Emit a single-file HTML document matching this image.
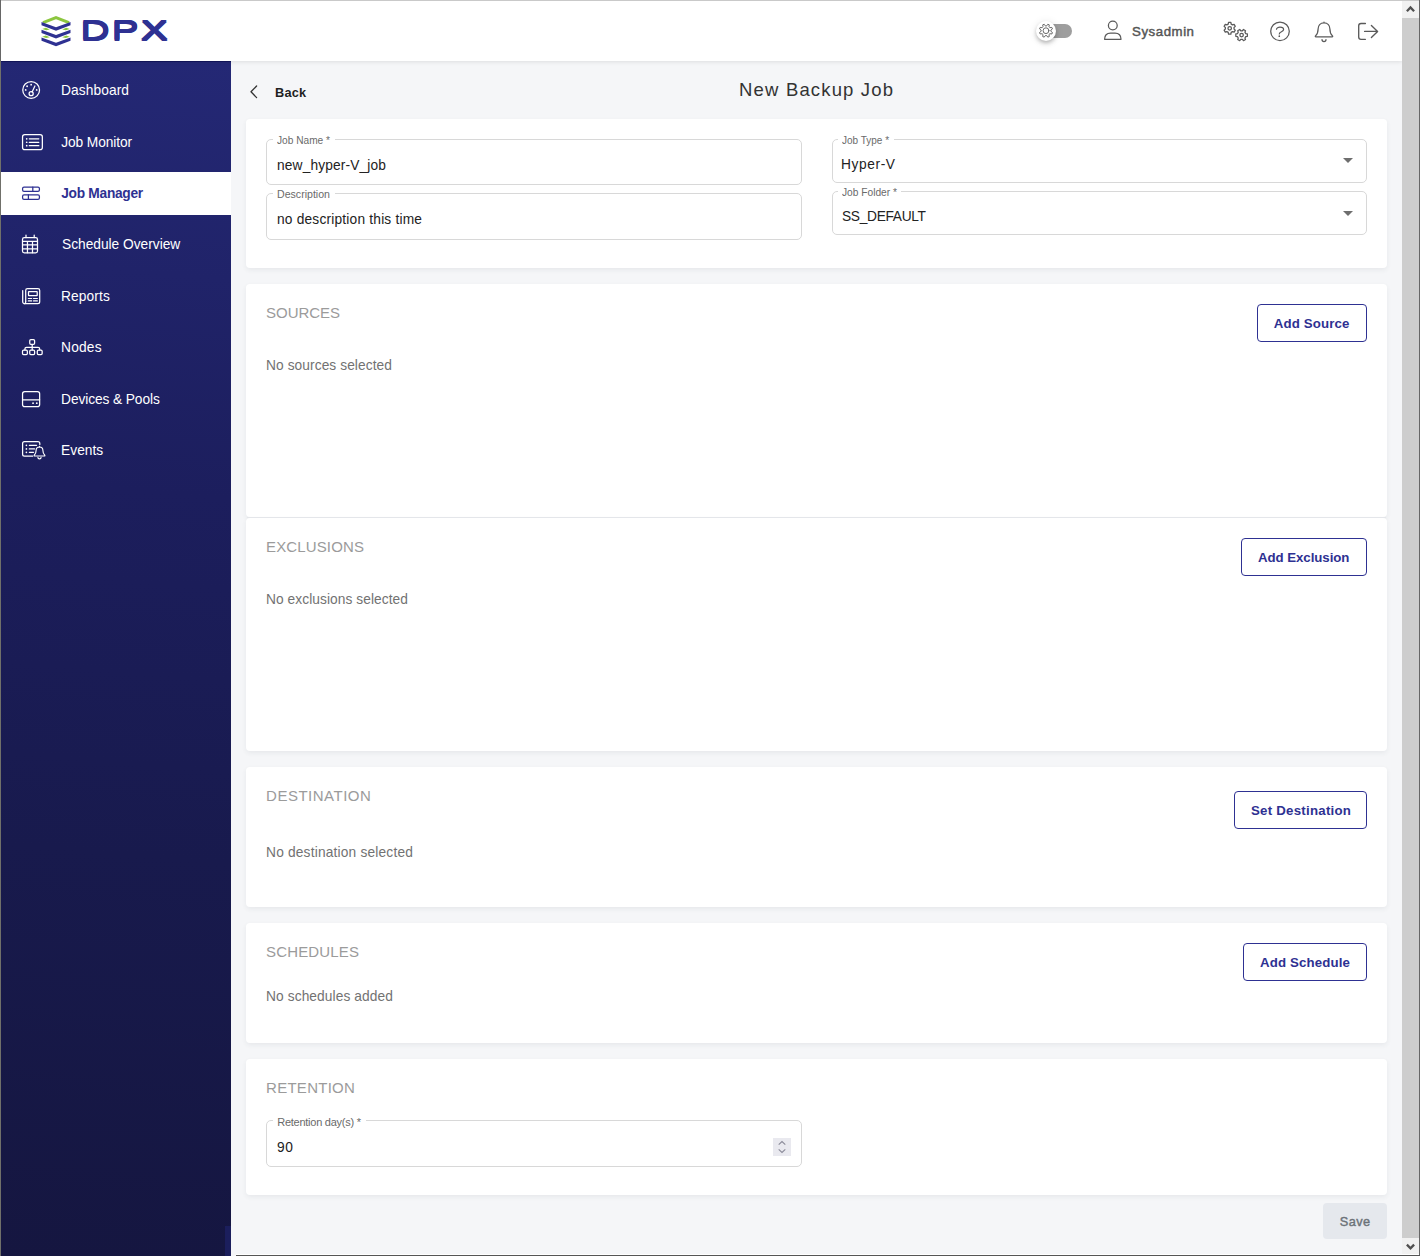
<!DOCTYPE html>
<html lang="en"><head><meta charset="utf-8"><title>DPX - New Backup Job</title>
<style>
html,body{margin:0;padding:0}
body{width:1420px;height:1256px;position:relative;overflow:hidden;background:#f5f6f8;font-family:"Liberation Sans",sans-serif;}
.t{position:absolute;white-space:nowrap;line-height:1;z-index:5}
.abs{position:absolute}
#hdr{left:1px;top:1px;width:1401px;height:60px;background:#fff;box-shadow:0 1px 4px rgba(0,0,0,.10);z-index:3}
#side{left:1px;top:61px;width:230px;height:1195px;background:linear-gradient(185deg,#242875 0%,#1c1e5d 36%,#181a4d 66%,#151640 100%);z-index:2}
#active{left:1px;top:172px;width:230px;height:43px;background:#fff;z-index:3}
.card{position:absolute;left:246px;width:1141px;background:#fff;border-radius:4px;box-shadow:0 2px 5px rgba(40,50,70,.07);z-index:1}
.fs{position:absolute;border:1px solid #d8d8d8;border-radius:5px;box-sizing:border-box;z-index:4}
.gap{position:absolute;background:#fff;height:3px;z-index:5}
.btn{position:absolute;box-sizing:border-box;border:1px solid #2e3192;border-radius:4px;background:#fff;z-index:4}
svg{position:absolute;overflow:visible;z-index:12}
.wb{position:absolute;z-index:20}

</style></head>
<body>
<div class="abs" id="hdr"></div>
<div class="abs" id="side"></div>
<div class="abs" id="active"></div>

<span id="logo" class="t" style="left:79.8px;top:17.2px;font-size:26.8px;font-weight:400;color:#2e3192;letter-spacing:1.5px;transform-origin:0 0;transform:scaleX(1.5);text-shadow:0.7px 0 0 #2e3192,0 1px 0 #2e3192,0.7px 1px 0 #2e3192,0 2px 0 #2e3192,0.7px 2px 0 #2e3192;z-index:13">DPX</span>
<div class="abs" style="left:1040px;top:24px;width:32px;height:14px;border-radius:7px;background:#9e9e9e;z-index:10"></div>
<div class="abs" style="left:1036px;top:20.7px;width:20px;height:20px;border-radius:50%;background:#fff;box-shadow:0 2px 4px -1px rgba(0,0,0,.2),0 3px 4px 0 rgba(0,0,0,.10),0 1px 8px 0 rgba(0,0,0,.10);z-index:11"></div>
<!-- cards -->
<div class="card" style="top:119px;height:149px"></div>
<div class="card" style="top:284px;height:233px"></div>
<div class="card" style="top:518px;height:233px"></div>
<div class="card" style="top:767px;height:140px"></div>
<div class="card" style="top:923px;height:120px"></div>
<div class="card" style="top:1059px;height:136px"></div>

<div class="abs" style="left:247px;top:517px;width:1139px;height:1px;background:#e4e6ea;z-index:2"></div>
<!-- fields -->
<div class="fs" style="left:266px;top:139px;width:536px;height:46px"></div>
<div class="gap" style="left:273px;top:138px;width:62px"></div>
<div class="fs" style="left:266px;top:193px;width:536px;height:47px"></div>
<div class="gap" style="left:273px;top:192px;width:62px"></div>
<div class="fs" style="left:832px;top:139px;width:535px;height:44px"></div>
<div class="gap" style="left:838px;top:138px;width:56px"></div>
<div class="fs" style="left:832px;top:191px;width:535px;height:44px"></div>
<div class="gap" style="left:838px;top:190px;width:63px"></div>
<div class="fs" style="left:266px;top:1120px;width:536px;height:47px"></div>
<div class="gap" style="left:273px;top:1119px;width:93px"></div>

<!-- buttons -->
<div class="btn" style="left:1257px;top:304px;width:110px;height:38px"></div>
<div class="btn" style="left:1241px;top:538px;width:126px;height:38px"></div>
<div class="btn" style="left:1234px;top:791px;width:133px;height:38px"></div>
<div class="btn" style="left:1243px;top:943px;width:124px;height:38px"></div>
<div class="abs" style="left:1323px;top:1203px;width:64px;height:36px;border-radius:4px;background:#e5e8ed;z-index:4"></div>

<!-- scrollbar -->
<div class="abs" style="left:1402px;top:1px;width:17px;height:1254px;background:#f1f1f1;z-index:10"></div>
<div class="abs" style="left:1402px;top:18px;width:17px;height:1220px;background:#cdcdcd;z-index:11"></div>

<!-- window border -->
<div class="wb" style="left:0;top:0;width:1420px;height:1px;background:#c9c9c9"></div>
<div class="wb" style="left:0;top:0;width:1px;height:61px;background:#666666"></div>
<div class="wb" style="left:0;top:61px;width:1px;height:1195px;background:#70706a"></div>
<div class="abs" style="left:1px;top:61px;width:230px;height:1px;background:rgba(5,8,70,.55);z-index:3"></div>
<div class="wb" style="left:1419px;top:0;width:1px;height:1256px;background:#666666"></div>
<div class="wb" style="left:236px;top:1254px;width:1183px;height:1px;background:#ffffff"></div>
<div class="wb" style="left:236px;top:1255px;width:1184px;height:1px;background:#555555"></div>
<div class="abs" style="left:225px;top:1226px;width:6px;height:30px;background:#1b1e5c;z-index:3"></div>

<svg width="1420" height="1256" viewBox="0 0 1420 1256" style="left:0;top:0" fill="none" stroke-linecap="round" stroke-linejoin="round">
<g transform="translate(41,16)">
<path d="M2,6.6 L15,1.7 L28,6.6" stroke="#8cc63f" stroke-width="3" stroke-linecap="butt" stroke-linejoin="miter"/>
<polygon fill="#2e3192" points="0.5,6.00 15,11.20 29.5,6.00 29.5,9.20 15,14.70 0.5,9.20"/>
<polygon fill="#2e3192" points="0.5,13.75 15,18.95 29.5,13.75 29.5,16.95 15,22.45 0.5,16.95"/>
<polygon fill="#2e3192" points="0.5,21.50 15,26.70 29.5,21.50 29.5,24.70 15,30.20 0.5,24.70"/>
<polygon fill="#8cc63f" points="1.2,12.90 4.8,11.80 8.8,13.40 5.2,14.30"/>
<polygon fill="#8cc63f" points="28.8,12.90 25.2,11.80 21.2,13.40 24.8,14.30"/>
<polygon fill="#8cc63f" points="1.2,20.65 4.8,19.55 8.8,21.15 5.2,22.05"/>
<polygon fill="#8cc63f" points="28.8,20.65 25.2,19.55 21.2,21.15 24.8,22.05"/>
</g>
<g stroke="#ffffff" stroke-width="1.25">
<circle cx="31.15" cy="89.9" r="8.4"/>
<circle cx="31.15" cy="93.7" r="2.05"/>
<path d="M32.1,91.9 L34.9,86.0"/>
<circle cx="31.15" cy="84.70" r="0.9" fill="#ffffff" stroke="none"/>
<circle cx="27.10" cy="86.25" r="0.9" fill="#ffffff" stroke="none"/>
<circle cx="25.70" cy="89.90" r="0.9" fill="#ffffff" stroke="none"/>
<circle cx="36.70" cy="89.90" r="0.9" fill="#ffffff" stroke="none"/>
<rect x="22.55" y="134.55" width="19.8" height="15.1" rx="2.2"/>
<path d="M29.3,138.80 H38.8"/>
<circle cx="26.7" cy="138.80" r="0.85" fill="#ffffff" stroke="none"/>
<path d="M29.3,142.25 H38.8"/>
<circle cx="26.7" cy="142.25" r="0.85" fill="#ffffff" stroke="none"/>
<path d="M29.3,145.65 H38.8"/>
<circle cx="26.7" cy="145.65" r="0.85" fill="#ffffff" stroke="none"/>
</g>
<g stroke="#2e3192" stroke-width="1.25">
<rect x="22.6" y="187" width="16.8" height="4.4" rx="1.4"/>
<path d="M32.8,187 V191.4"/>
<rect x="22.6" y="194.9" width="16.8" height="4.4" rx="1.4"/>
<path d="M28.4,194.9 V199.3"/>
</g>
<g stroke="#ffffff" stroke-width="1.25">
<rect x="22.5" y="237.7" width="15" height="15.1" rx="1.8"/>
<path d="M26,235 V237.6 M34.2,235 V237.6"/>
<path d="M22.6,241.25 H37.4 M22.6,244.9 H37.4 M22.6,248.9 H37.4 M27.45,241.3 V252.7 M32.5,241.3 V252.7"/>
<path d="M25.7,301.6 V290.4 a1.8,1.8 0 0 1 1.8,-1.8 H37.9 a1.8,1.8 0 0 1 1.8,1.8 V301.8 a1.9,1.9 0 0 1 -1.9,1.9 H24.6 a1.9,1.9 0 0 1 -1.9,-1.9 V290.6"/>
<path d="M25.7,301.6 a1.5,1.9 0 0 1 -1.5,2.1"/>
<rect x="28.5" y="291.6" width="8.7" height="3.9" rx="0.3"/>
<path d="M28.3,298.5 H31.7 M33.5,298.5 H37.4 M28.3,300.9 H31.7 M33.5,300.9 H37.4" stroke-width="1.1"/>
<rect x="29.75" y="339.6" width="4.85" height="4.8" rx="1.1"/>
<rect x="22.50" y="350.1" width="4.85" height="4.6" rx="1.1"/>
<rect x="29.75" y="350.1" width="4.85" height="4.6" rx="1.1"/>
<rect x="37.30" y="350.1" width="4.85" height="4.6" rx="1.1"/>
<path d="M32.2,344.6 V349.9 M24.9,349.9 V348.9 a1.6,1.6 0 0 1 1.6,-1.6 H38.1 a1.6,1.6 0 0 1 1.6,1.6 V349.9"/>
<rect x="22.55" y="391.6" width="17.1" height="15.1" rx="2.2"/>
<path d="M22.6,399.8 H39.6"/>
<circle cx="33.05" cy="403.2" r="0.9" fill="#ffffff" stroke="none"/>
<circle cx="36.8" cy="403.2" r="0.9" fill="#ffffff" stroke="none"/>
<path d="M32.6,456.2 H24.5 a1.9,1.9 0 0 1 -1.9,-1.9 V443.4 a1.9,1.9 0 0 1 1.9,-1.9 H37.9 a1.9,1.9 0 0 1 1.9,1.9 V444.6"/>
<path d="M29.3,445.30 H36.60" stroke-width="1.15"/>
<circle cx="26.4" cy="445.30" r="0.85" fill="#ffffff" stroke="none"/>
<path d="M29.3,448.90 H34.60" stroke-width="1.15"/>
<circle cx="26.4" cy="448.90" r="0.85" fill="#ffffff" stroke="none"/>
<path d="M29.3,452.30 H33.60" stroke-width="1.15"/>
<circle cx="26.4" cy="452.30" r="0.85" fill="#ffffff" stroke="none"/>
<path d="M39.5,446.4 V447 M39.5,447 c-2.1,0 -3.4,1.6 -3.4,3.6 c0,2.6 -0.7,3.7 -1.9,4.7 c-0.3,0.3 -0.1,0.7 0.3,0.7 H44.5 c0.4,0 0.6,-0.4 0.3,-0.7 c-1.2,-1 -1.9,-2.1 -1.9,-4.7 c0,-2 -1.3,-3.6 -3.4,-3.6 Z" stroke-width="1.15"/>
<path d="M37.9,457.3 a1.6,1.6 0 0 0 3.2,0" stroke-width="1.15"/>
</g>
<path d="M256.6,86 L251,91.8 L256.6,97.6" stroke="#333" stroke-width="1.3"/>
<g stroke="#5a5a5a" stroke-width="0.9">
<path d="M1046.60,25.84 L1047.80,24.25 L1049.29,24.86 L1049.01,26.84 L1049.86,27.69 L1051.84,27.41 L1052.45,28.90 L1050.86,30.10 L1050.86,31.30 L1052.45,32.50 L1051.84,33.99 L1049.86,33.71 L1049.01,34.56 L1049.29,36.54 L1047.80,37.15 L1046.60,35.56 L1045.40,35.56 L1044.20,37.15 L1042.71,36.54 L1042.99,34.56 L1042.14,33.71 L1040.16,33.99 L1039.55,32.50 L1041.14,31.30 L1041.14,30.10 L1039.55,28.90 L1040.16,27.41 L1042.14,27.69 L1042.99,26.84 L1042.71,24.86 L1044.20,24.25 L1045.40,25.84 Z"/>
<circle cx="1046" cy="30.7" r="2.9"/>
</g>
<g stroke="#5a5a5a" stroke-width="1.25">
<circle cx="1112.8" cy="25.45" r="4.4"/>
<path d="M1104.6,39.3 C1104.6,35 1107,33.1 1110.6,33.1 H1115 C1118.6,33.1 1121,35 1121,39.3 Z"/>
<path d="M1228.23,24.10 L1228.53,22.47 L1230.87,22.47 L1231.17,24.10 L1232.56,24.91 L1234.12,24.34 L1235.29,26.37 L1234.03,27.45 L1234.03,29.05 L1235.29,30.13 L1234.12,32.16 L1232.56,31.59 L1231.17,32.40 L1230.87,34.03 L1228.53,34.03 L1228.23,32.40 L1226.84,31.59 L1225.28,32.16 L1224.11,30.13 L1225.37,29.05 L1225.37,27.45 L1224.11,26.37 L1225.28,24.34 L1226.84,24.91 Z"/>
<circle cx="1229.7" cy="28.25" r="1.75"/>
<path d="M1242.40,30.77 L1243.48,29.51 L1245.51,30.68 L1244.94,32.24 L1245.75,33.63 L1247.38,33.93 L1247.38,36.27 L1245.75,36.57 L1244.94,37.96 L1245.51,39.52 L1243.48,40.69 L1242.40,39.43 L1240.80,39.43 L1239.72,40.69 L1237.69,39.52 L1238.26,37.96 L1237.45,36.57 L1235.82,36.27 L1235.82,33.93 L1237.45,33.63 L1238.26,32.24 L1237.69,30.68 L1239.72,29.51 L1240.80,30.77 Z"/>
<circle cx="1241.6" cy="35.1" r="1.75"/>
<circle cx="1280" cy="31.35" r="9.3"/>
<path d="M1276.5,29.2 C1276.5,26.6 1283.6,26.4 1283.6,29.6 C1283.6,31.8 1279.3,31.6 1279.3,33.9"/>
<circle cx="1279.3" cy="36.2" r="0.85" fill="#5a5a5a" stroke="none"/>
<path d="M1324,22 V22.8 M1324,22.8 c-3.7,0 -5.9,2.7 -5.9,6.2 c0,4.2 -1,5.5 -2.6,6.9 c-0.4,0.4 -0.2,1 0.4,1 H1332.100 c0.6,0 0.8,-0.6 0.4,-1 c-1.6,-1.400 -2.6,-2.700 -2.6,-6.9 c0,-3.5 -2.2,-6.2 -5.9,-6.2 Z"/>
<path d="M1322,39.6 a2,2 0 0 0 4,0"/>
<path d="M1365.4,23.500 H1361 a2.3,2.3 0 0 0 -2.3,2.3 V37 a2.3,2.3 0 0 0 2.3,2.3 H1365.4" stroke-width="1.35"/>
<path d="M1364.600,31.4 H1377.600 M1371.400,25.400 L1377.600,31.4 L1371.400,37.5" stroke-width="1.35"/>
</g>
<polygon points="1343,158 1353,158 1348,163" fill="#6e6e6e"/>
<polygon points="1343,211 1353,211 1348,216" fill="#6e6e6e"/>
<rect x="773" y="1138" width="18" height="18" fill="#e9e9ef"/>
<path d="M778.700,1144.700 L782,1141.600 L785.300,1144.700 M778.700,1149.400 L782,1152.500 L785.300,1149.400" stroke="#8a8a98" stroke-width="1.1" stroke-linecap="butt" stroke-linejoin="miter"/>
<path d="M1406.900,11.300 L1410.500,7.500 L1414.100,11.300" stroke="#505050" stroke-width="2.3" stroke-linecap="butt" stroke-linejoin="miter"/>
<path d="M1406.900,1244.600 L1410.500,1248.400 L1414.100,1244.600" stroke="#505050" stroke-width="2.3" stroke-linecap="butt" stroke-linejoin="miter"/>
</svg>
<!-- text -->
<span class="t" id="s0" style="left:61.10px;top:84.00px;font-size:13.75px;font-weight:400;color:#ffffff;letter-spacing:0.077px;">Dashboard</span>
<span class="t" id="s1" style="left:61.21px;top:136.00px;font-size:13.75px;font-weight:400;color:#ffffff;letter-spacing:-0.084px;">Job Monitor</span>
<span class="t" id="s2" style="left:61.21px;top:187.00px;font-size:13.75px;font-weight:700;color:#2e3192;letter-spacing:-0.281px;">Job Manager</span>
<span class="t" id="s3" style="left:62.00px;top:238.00px;font-size:13.75px;font-weight:400;color:#ffffff;letter-spacing:-0.013px;">Schedule Overview</span>
<span class="t" id="s4" style="left:61.10px;top:290.00px;font-size:13.75px;font-weight:400;color:#ffffff;letter-spacing:0.097px;">Reports</span>
<span class="t" id="s5" style="left:61.10px;top:341.00px;font-size:13.75px;font-weight:400;color:#ffffff;letter-spacing:0.183px;">Nodes</span>
<span class="t" id="s6" style="left:61.10px;top:393.00px;font-size:13.75px;font-weight:400;color:#ffffff;letter-spacing:-0.103px;">Devices &amp; Pools</span>
<span class="t" id="s7" style="left:61.10px;top:444.00px;font-size:13.75px;font-weight:400;color:#ffffff;letter-spacing:0.003px;">Events</span>
<span class="t" id="back" style="left:275.00px;top:87.00px;font-size:12.75px;font-weight:700;color:#1f1f1f;letter-spacing:0.172px;">Back</span>
<span class="t" id="title" style="left:739.10px;top:81.01px;font-size:18.5px;font-weight:400;color:#333333;letter-spacing:1.159px;">New Backup Job</span>
<span class="t" id="user" style="left:1132.00px;top:25.02px;font-size:13.25px;font-weight:400;color:#555555;letter-spacing:0.545px;-webkit-text-stroke:0.45px #555555;">Sysadmin</span>
<span class="t" id="l1" style="left:277.00px;top:135.01px;font-size:11.25px;font-weight:400;color:#6a6a6a;letter-spacing:0.000px;transform-origin:0 0;transform:scaleX(0.9016);">Job Name *</span>
<span class="t" id="l2" style="left:277.05px;top:189.01px;font-size:11.25px;font-weight:400;color:#6a6a6a;letter-spacing:0.000px;transform-origin:0 0;transform:scaleX(0.9417);">Description</span>
<span class="t" id="l3" style="left:842.00px;top:135.01px;font-size:11.25px;font-weight:400;color:#6a6a6a;letter-spacing:0.000px;transform-origin:0 0;transform:scaleX(0.8884);">Job Type *</span>
<span class="t" id="l4" style="left:842.00px;top:187.01px;font-size:11.25px;font-weight:400;color:#6a6a6a;letter-spacing:0.000px;transform-origin:0 0;transform:scaleX(0.9067);">Job Folder *</span>
<span class="t" id="l5" style="left:277.21px;top:1117.01px;font-size:11px;font-weight:400;color:#6a6a6a;letter-spacing:-0.250px;">Retention day(s) *</span>
<span class="t" id="v1" style="left:277.00px;top:159.00px;font-size:13.75px;font-weight:400;color:#222222;letter-spacing:0.138px;">new_hyper-V_job</span>
<span class="t" id="v2" style="left:277.00px;top:213.00px;font-size:13.75px;font-weight:400;color:#222222;letter-spacing:0.190px;">no description this time</span>
<span class="t" id="v3" style="left:841.10px;top:158.00px;font-size:13.75px;font-weight:400;color:#222222;letter-spacing:0.577px;">Hyper-V</span>
<span class="t" id="v4" style="left:842.00px;top:210.00px;font-size:13.75px;font-weight:400;color:#222222;letter-spacing:-0.318px;">SS_DEFAULT</span>
<span class="t" id="v5" style="left:277.00px;top:1141.00px;font-size:13.75px;font-weight:400;color:#222222;letter-spacing:0.703px;">90</span>
<span class="t" id="h1" style="left:266.05px;top:305.01px;font-size:15px;font-weight:400;color:#9b9b9b;letter-spacing:-0.040px;">SOURCES</span>
<span class="t" id="h2" style="left:266.05px;top:539.01px;font-size:15px;font-weight:400;color:#9b9b9b;letter-spacing:0.133px;">EXCLUSIONS</span>
<span class="t" id="h3" style="left:266.05px;top:788.01px;font-size:15px;font-weight:400;color:#9b9b9b;letter-spacing:0.507px;">DESTINATION</span>
<span class="t" id="h4" style="left:266.05px;top:944.01px;font-size:15px;font-weight:400;color:#9b9b9b;letter-spacing:0.156px;">SCHEDULES</span>
<span class="t" id="h5" style="left:266.05px;top:1080.01px;font-size:15px;font-weight:400;color:#9b9b9b;letter-spacing:0.272px;">RETENTION</span>
<span class="t" id="e1" style="left:266.05px;top:359.00px;font-size:13.75px;font-weight:400;color:#727272;letter-spacing:0.071px;">No sources selected</span>
<span class="t" id="e2" style="left:266.05px;top:593.00px;font-size:13.75px;font-weight:400;color:#727272;letter-spacing:0.058px;">No exclusions selected</span>
<span class="t" id="e3" style="left:266.05px;top:846.00px;font-size:13.75px;font-weight:400;color:#727272;letter-spacing:0.177px;">No destination selected</span>
<span class="t" id="e4" style="left:266.05px;top:990.00px;font-size:13.75px;font-weight:400;color:#727272;letter-spacing:0.087px;">No schedules added</span>
<span class="t" id="b1" style="left:1273.84px;top:317.01px;font-size:13.25px;font-weight:700;color:#2e3192;letter-spacing:0.136px;">Add Source</span>
<span class="t" id="b2" style="left:1258.00px;top:551.01px;font-size:13.25px;font-weight:700;color:#2e3192;letter-spacing:-0.051px;">Add Exclusion</span>
<span class="t" id="b3" style="left:1251.00px;top:804.01px;font-size:13.25px;font-weight:700;color:#2e3192;letter-spacing:0.250px;">Set Destination</span>
<span class="t" id="b4" style="left:1260.00px;top:956.01px;font-size:13.25px;font-weight:700;color:#2e3192;letter-spacing:0.149px;">Add Schedule</span>
<span class="t" id="b5" style="left:1339.79px;top:1216.01px;font-size:12.75px;font-weight:400;color:#6b7278;letter-spacing:0.452px;-webkit-text-stroke:0.4px #6b7278;">Save</span>
</body></html>
